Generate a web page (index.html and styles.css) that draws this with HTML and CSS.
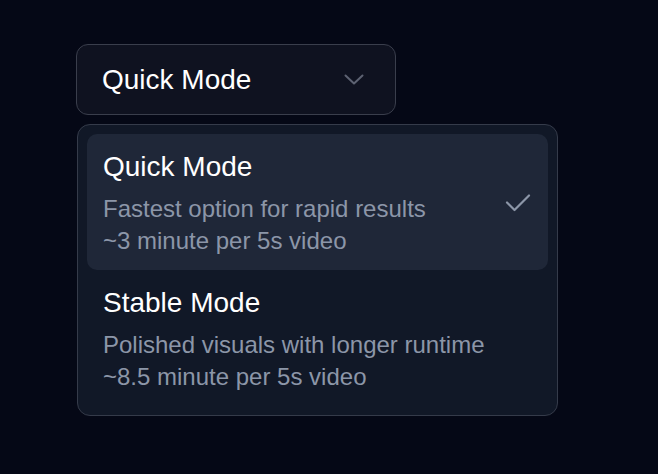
FILE: index.html
```html
<!DOCTYPE html>
<html lang="en">

<head>
    <meta charset="UTF-8">
    <meta name="viewport" content="width=device-width, initial-scale=1.0">
    <title>Mode Select</title>
    <link rel="stylesheet" href="styles.css">
</head>

<body>
    <main class="page">
        <div class="select">
            <button class="select-trigger" type="button">
                <span class="select-value">Quick Mode</span>
                <svg class="chevron" width="20" height="11" viewBox="0 0 20 11" fill="none">
                    <path d="M1.5 1.5 L10 9.5 L18.5 1.5" stroke="currentColor" stroke-width="2" stroke-linecap="round" stroke-linejoin="round" />
                </svg>
            </button>

            <div class="select-menu">
                <div class="option selected">
                    <div class="option-text">
                        <div class="option-title">Quick Mode</div>
                        <div class="option-desc">Fastest option for rapid results</div>
                        <div class="option-desc">~3 minute per 5s video</div>
                    </div>
                    <!-- check mark for the active option -->
                    <svg class="check" width="26" height="19" viewBox="0 0 26 19" fill="none">
                        <path d="M2 9.5 L9.5 17 L24 2.5" stroke="currentColor" stroke-width="2.2" stroke-linecap="round" stroke-linejoin="round" />
                    </svg>
                </div>
                <div class="option">
                    <div class="option-text">
                        <div class="option-title">Stable Mode</div>
                        <div class="option-desc">Polished visuals with longer runtime</div>
                        <div class="option-desc">~8.5 minute per 5s video</div>
                    </div>
                </div>
            </div>
        </div>
    </main>
</body>

</html>
```

FILE: styles.css
```css
* {
    margin: 0;
    padding: 0;
    box-sizing: border-box;
}

body {
    height: 100vh;
    background: #050816;
    font-family: "Liberation Sans", Arial, sans-serif;
    color: #ffffff;
    overflow: hidden;
}

.page {
    padding: 44px 0 0 76px;
}

.select {
    display: flex;
    flex-direction: column;
    align-items: flex-start;
    gap: 9px;
}

.select-trigger {
    width: 320px;
    height: 71px;
    display: flex;
    align-items: center;
    justify-content: space-between;
    padding: 0 31px 0 25px;
    background: #0f1220;
    border: 1.5px solid #3a3e4c;
    border-radius: 12px;
    color: #ffffff;
    font-family: inherit;
    font-size: 28px;
}

.chevron {
    color: #5d6272;
}

.select-menu {
    width: 481px;
    padding: 9px;
    margin-left: 1px;
    background: #111827;
    border: 1.5px solid #353b4a;
    border-radius: 13px;
}

.option {
    display: flex;
    align-items: center;
    justify-content: space-between;
    height: 136px;
    padding: 2px 17px 0 16px;
    border-radius: 10px;
}

.option.selected {
    background: #1f2738;
}

.option-title {
    font-size: 28px;
    line-height: 36px;
    margin-bottom: 8px;
}

.option-desc {
    font-size: 24px;
    line-height: 32px;
    color: #8c96a8;
}

.check {
    color: #8c96a8;
    margin-top: -2px;
}
```
